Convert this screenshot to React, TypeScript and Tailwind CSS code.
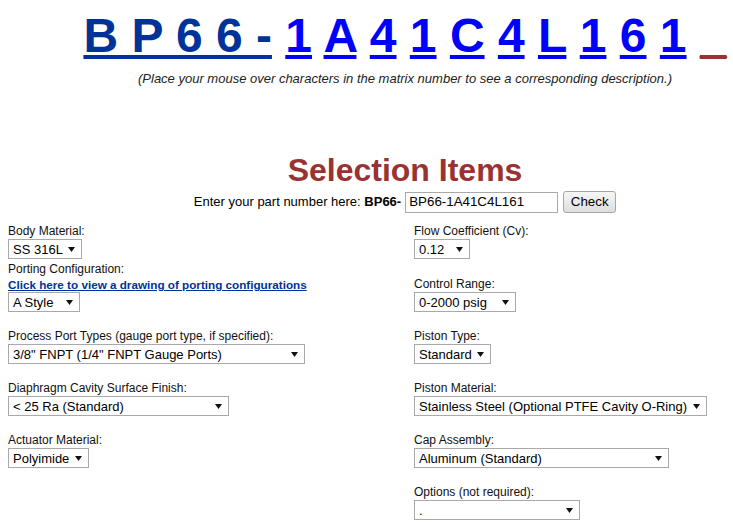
import React from "react";

const chars = ["1", "A", "4", "1", "C", "4", "L", "1", "6", "1"];

const Select = ({ value, className }: { value: string; className: string }) => {
  return (
    <div
      className={`flex h-[20px] items-center justify-between border border-[#a9a9a9] bg-white pl-[4px] pr-[6px] text-[13px] leading-none text-black ${className}`}
    >
      <span className="whitespace-pre pt-px">{value}</span>
      <svg width="7" height="5" viewBox="0 0 7 5" className="shrink-0">
        <path d="M0 0h7L3.5 5z" fill="#111" />
      </svg>
    </div>
  );
};

const Field = ({ label, children }: { label: React.ReactNode; children: React.ReactNode }) => {
  return (
    <div className="flex flex-col items-start">
      <div className="text-[12px] leading-[15px] text-[#111]">{label}</div>
      {children}
    </div>
  );
};

const App = () => {
  return (
    <div className="w-[733px] h-[525px] overflow-hidden bg-white font-['Liberation_Sans',Arial,sans-serif]">
      <div className="w-[810px]">
        <div className="pt-[8px] text-center text-[48px] font-bold leading-[55px] whitespace-pre">
          <a className="text-[#003399] underline">B P 6 6 -</a>
          {chars.map((c, i) => (
            <React.Fragment key={i}>
              {" "}
              <a className="text-[#0000ff] underline">{c}</a>
            </React.Fragment>
          ))}{" "}
          <span className="text-[#993333] underline">_</span>
        </div>
        <p className="mt-[8px] text-center text-[13px] italic leading-[15px] text-[#222]">
          (Place your mouse over characters in the matrix number to see a corresponding description.)
        </p>

        <h2 className="mt-[66px] text-center text-[32px] font-bold leading-[37px] text-[#993333]">
          Selection Items
        </h2>
        <div className="mt-[2px] flex items-center justify-center text-[13px] text-black">
          <span>
            Enter your part number here: <b>BP66-</b>
          </span>
          <div className="ml-[4px] flex h-[21px] w-[153px] items-center border border-[#a9a9a9] pl-[3px] text-[13.33px]">
            BP66-1A41C4L161
          </div>
          <button className="ml-[5px] h-[22px] w-[53px] rounded-[3px] border border-[#a6a6a6] bg-gradient-to-b from-[#f6f6f6] to-[#dedede] text-[13.33px] text-black">
            Check
          </button>
        </div>

        <div className="mt-[11px] px-2">
          <div className="grid grid-cols-[406px_1fr] items-end">
            <Field label="Body Material:">
              <Select value="SS 316L" className="w-[74px]" />
            </Field>
            <Field label="Flow Coefficient (Cv):">
              <Select value="0.12" className="w-[56px]" />
            </Field>
          </div>
          <div className="mt-[3px] grid grid-cols-[406px_1fr] items-end">
            <div className="flex flex-col items-start">
              <div className="text-[12px] leading-[15px] text-[#111]">Porting Configuration:</div>
              <a className="text-[11.7px] font-bold leading-[15px] text-[#003399] underline">
                Click here to view a drawing of porting configurations
              </a>
              <Select value="A Style" className="w-[72px]" />
            </div>
            <Field label="Control Range:">
              <Select value="0-2000 psig" className="w-[102px]" />
            </Field>
          </div>
          <div className="mt-[17px] grid grid-cols-[406px_1fr] items-end">
            <Field label="Process Port Types (gauge port type, if specified):">
              <Select value={'3/8" FNPT (1/4" FNPT Gauge Ports)'} className="w-[297px]" />
            </Field>
            <Field label="Piston Type:">
              <Select value="Standard" className="w-[77px]" />
            </Field>
          </div>
          <div className="mt-[17px] grid grid-cols-[406px_1fr] items-end">
            <Field label="Diaphragm Cavity Surface Finish:">
              <Select value="< 25 Ra (Standard)" className="w-[221px]" />
            </Field>
            <Field label="Piston Material:">
              <Select value="Stainless Steel (Optional PTFE Cavity O-Ring)" className="w-[293px]" />
            </Field>
          </div>
          <div className="mt-[17px] grid grid-cols-[406px_1fr] items-end">
            <Field label="Actuator Material:">
              <Select value="Polyimide" className="w-[81px]" />
            </Field>
            <Field label="Cap Assembly:">
              <Select value="Aluminum (Standard)" className="w-[255px]" />
            </Field>
          </div>
          <div className="mt-[17px] grid grid-cols-[406px_1fr] items-end">
            <div />
            <Field label="Options (not required):">
              <Select value="." className="w-[166px]" />
            </Field>
          </div>
        </div>
      </div>
    </div>
  );
};

export default App;
